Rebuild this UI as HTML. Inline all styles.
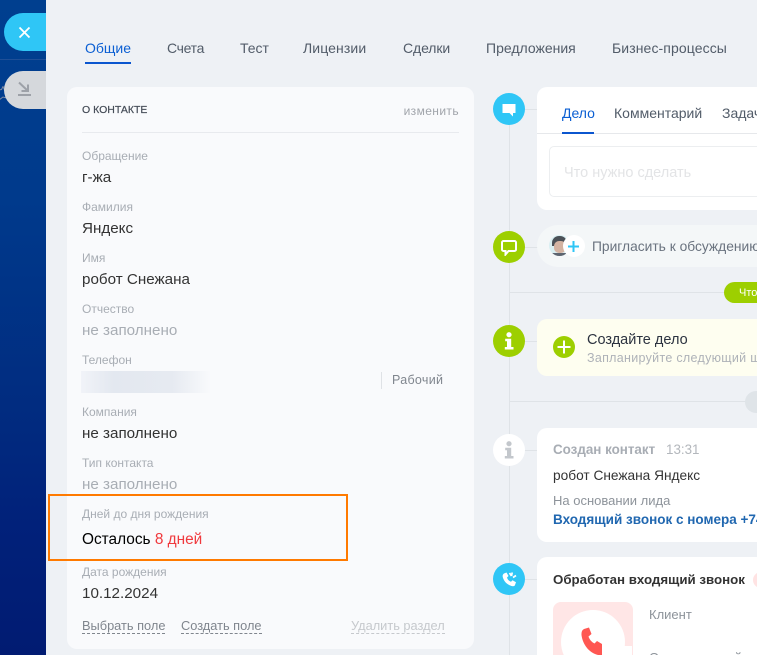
<!DOCTYPE html>
<html lang="ru"><head><meta charset="utf-8"><style>
html,body{margin:0;padding:0;width:757px;height:655px;overflow:hidden}
#r{position:absolute;left:0;top:0;width:757px;height:655px;overflow:hidden;background:#eef1f5;font-family:"Liberation Sans",sans-serif}
.a{position:absolute;white-space:nowrap}
.t{font-size:14px;line-height:16px;color:#525c69;top:40px}
.l{font-size:12px;line-height:14px;color:#a8adb4;left:82px}
.v{font-size:15.2px;line-height:18px;color:#333;left:82px}
.e{color:#a8adb4}
.c{position:absolute;left:493px;width:32px;height:32px;border-radius:50%}
.h{position:absolute;left:510px;height:1px;background:#dfe3e7}
.card{position:absolute;left:537px;width:240px;background:#fff;border-radius:10px}
</style></head><body><div id="r">
<div class="a" style="left:0;top:0;width:46px;height:655px;background:linear-gradient(180deg,#003f8f 0%,#003a8c 30%,#012c80 62%,#01217a 80%,#011b72 100%)"></div>
<div class="a" style="left:0;top:59px;width:46px;height:1px;background:#1f4f97"></div>
<div class="a" style="left:4px;top:13px;width:42px;height:38px;background:#2fc6f6;border-radius:19px 0 0 19px"></div>
<svg class="a" style="left:18px;top:26px" width="13" height="13"><path d="M1.5 1.5L11.5 11.5M11.5 1.5L1.5 11.5" stroke="#fff" stroke-width="1.8"/></svg>
<svg class="a" style="left:0;top:86px" width="12" height="16"><path d="M-2 4L1.5 3.5L3 0.5L4.5 4L8.5 5L6 8L8 12.5L3 11L-1 14" fill="none" stroke="#7d8ba5" stroke-width="1"/></svg>
<div class="a" style="left:4px;top:71px;width:42px;height:38px;background:#d5d8dc;border-radius:19px 0 0 19px"></div>
<svg class="a" style="left:17px;top:80px" width="16" height="18"><path d="M2 2.5L11 11M11 4.5V11H4.5" fill="none" stroke="#9da1a8" stroke-width="2"/><path d="M1 15H14" stroke="#9da1a8" stroke-width="2"/></svg>

<div class="a t" style="left:85px;color:#0b5fd3">Общие</div>
<div class="a" style="left:85px;top:62px;width:46px;height:2px;background:#0b56cf"></div>
<div class="a t" style="left:167px;letter-spacing:-.3px">Счета</div>
<div class="a t" style="left:240px">Тест</div>
<div class="a t" style="left:303px;letter-spacing:.1px">Лицензии</div>
<div class="a t" style="left:403px;letter-spacing:-.1px">Сделки</div>
<div class="a t" style="left:486px">Предложения</div>
<div class="a t" style="left:612px;letter-spacing:.1px">Бизнес-процессы</div>

<div class="a" style="left:67px;top:87px;width:407px;height:562px;background:#f9fafc;border-radius:10px"></div>
<div class="a" style="left:82px;top:103px;font-size:10.5px;line-height:14px;color:#454c57;-webkit-text-stroke:.2px #454c57">О КОНТАКТЕ</div>
<div class="a" style="right:298px;top:104px;font-size:12px;line-height:14px;color:#a0a4aa;letter-spacing:.4px">изменить</div>
<div class="a" style="left:82px;top:132px;width:377px;height:1px;background:#e8eaee"></div>

<div class="a l" style="top:149px">Обращение</div><div class="a v" style="top:169px">г-жа</div>
<div class="a l" style="top:200px">Фамилия</div><div class="a v" style="top:220px">Яндекс</div>
<div class="a l" style="top:251px">Имя</div><div class="a v" style="top:271px">робот Снежана</div>
<div class="a l" style="top:302px">Отчество</div><div class="a v e" style="top:322px">не заполнено</div>
<div class="a l" style="top:353px">Телефон</div>
<div class="a" style="left:81px;top:371px;width:130px;height:22px;background:linear-gradient(90deg,#f1f3f8,#e3e8f0 25%,#e6eaf1 70%,#f9fafc)"></div>
<div class="a" style="left:381px;top:372px;width:1px;height:17px;background:#dfe2e6"></div>
<div class="a" style="left:392px;top:373px;font-size:12.5px;line-height:15px;color:#80868e;letter-spacing:.3px">Рабочий</div>
<div class="a l" style="top:405px">Компания</div><div class="a v" style="top:425px">не заполнено</div>
<div class="a l" style="top:456px">Тип контакта</div><div class="a v e" style="top:476px">не заполнено</div>
<div class="a l" style="top:507px">Дней до дня рождения</div>
<div class="a v" style="top:531px;color:#000;font-size:15.4px">Осталось <span style="color:#f0393d">8 дней</span></div>
<div class="a" style="left:48px;top:494px;width:296px;height:63px;border:2px solid #ff7a00"></div>
<div class="a l" style="top:565px">Дата рождения</div><div class="a v" style="top:585px">10.12.2024</div>
<div class="a" style="left:82px;top:618px;font-size:12.8px;line-height:15px;color:#80868e;border-bottom:1px dashed #80868e">Выбрать поле</div>
<div class="a" style="left:181px;top:618px;font-size:12.8px;line-height:15px;color:#80868e;border-bottom:1px dashed #80868e">Создать поле</div>
<div class="a" style="left:351px;top:618px;font-size:12.8px;line-height:15px;color:#c6c9cd;border-bottom:1px dashed #c6c9cd">Удалить раздел</div>

<div class="a" style="left:509px;top:110px;width:1px;height:545px;background:#dfe3e7"></div>
<div class="h" style="top:109px;width:30px"></div>
<div class="h" style="top:247px;width:30px"></div>
<div class="h" style="top:292px;width:250px"></div>
<div class="h" style="top:341px;width:30px"></div>
<div class="h" style="top:401px;width:250px"></div>
<div class="h" style="top:450px;width:30px"></div>
<div class="h" style="top:579px;width:30px"></div>

<div class="c" style="top:93px;background:#2fc6f6"></div>
<svg class="a" style="left:502px;top:104px" width="14" height="13"><path d="M0.5 0H13.5V9H11V12.5L7.5 9H0.5Z" fill="#fff"/></svg>
<div class="c" style="top:231px;background:#9dcf00"></div>
<svg class="a" style="left:501px;top:240px" width="16" height="16"><path d="M2.5 1H13.5A1.5 1.5 0 0 1 15 2.5V9.5A1.5 1.5 0 0 1 13.5 11H7.5L4.5 14.5V11H2.5A1.5 1.5 0 0 1 1 9.5V2.5A1.5 1.5 0 0 1 2.5 1Z" fill="none" stroke="#fff" stroke-width="2"/></svg>
<div class="c" style="top:325px;background:#9dcf00"></div>
<svg class="a" style="left:504px;top:332px" width="10" height="18"><circle cx="5" cy="2.7" r="2.6" fill="#fff"/><path d="M1.2 6.8H7.2V15H9.5V17.5H0.8V15H3V9.2H1.2Z" fill="#fff"/></svg>
<div class="c" style="top:434px;background:#fff"></div>
<svg class="a" style="left:504px;top:441px" width="10" height="18"><circle cx="5" cy="2.7" r="2.6" fill="#c3c7cc"/><path d="M1.2 6.8H7.2V15H9.5V17.5H0.8V15H3V9.2H1.2Z" fill="#c3c7cc"/></svg>
<div class="c" style="top:563px;background:#2fc6f6"></div>
<svg class="a" style="left:501px;top:571px" width="17" height="17"><path d="M3 2.5L5.5 1.5L7.5 5L6 6.5C6.5 8.5 8 10 10 10.8L11.5 9.3L15 11.3L14 14C13.5 15.3 12 15.5 10.5 15C6 13.5 3 10.5 1.8 6.2C1.4 4.7 1.8 3.2 3 2.5Z" fill="#fff"/><path d="M8.5 2L10.5 5M10.5 5L11.2 1.5M12 6.5L15 4.5" fill="none" stroke="#fff" stroke-width="1.7"/></svg>

<div class="card" style="top:87px;height:123px"></div>
<div class="a t" style="left:562px;top:105px;color:#0b5fd3">Дело</div>
<div class="a t" style="left:614px;top:105px">Комментарий</div>
<div class="a t" style="left:722px;top:105px">Задачи</div>
<div class="a" style="left:537px;top:133px;width:220px;height:1px;background:#e6e8eb"></div>
<div class="a" style="left:562px;top:132px;width:32px;height:2px;background:#0b56cf"></div>
<div class="a" style="left:549px;top:146px;width:240px;height:51px;border:1px solid #eceef0;border-radius:5px;background:#fff;box-sizing:border-box"></div>
<div class="a" style="left:564px;top:164px;font-size:14.5px;line-height:18px;color:#e3e4e6">Что нужно сделать</div>

<div class="a" style="left:537px;top:225px;width:240px;height:42px;background:#f4f7f8;border-radius:21px"></div>
<div class="a" style="left:549px;top:235px;width:21px;height:21px;border-radius:50%;background:#d9eff2;overflow:hidden"><div class="a" style="left:3px;top:1px;width:15px;height:10px;background:#4b5157;border-radius:7px 7px 0 0"></div><div class="a" style="left:5px;top:6px;width:12px;height:12px;background:#d3b3a2;border-radius:5px"></div><div class="a" style="left:2px;top:18px;width:17px;height:4px;background:#5d6570"></div></div>
<div class="a" style="left:563px;top:235px;width:22px;height:22px;border-radius:50%;background:#fff"></div>
<svg class="a" style="left:568px;top:241px" width="11" height="11"><path d="M5.5 0V11M0 5.5H11" stroke="#2fc6f6" stroke-width="2"/></svg>
<div class="a" style="left:592px;top:239px;font-size:13.8px;line-height:16px;color:#6a737f">Пригласить к обсуждению</div>

<div class="a" style="left:724px;top:282px;width:60px;height:21px;border-radius:11px;background:#9dcf00"></div>
<div class="a" style="left:739px;top:286px;font-size:11px;line-height:14px;color:#fff">Что</div>

<div class="card" style="top:319px;height:57px;background:#fefef0"></div>
<div class="a" style="left:553px;top:336px;width:22px;height:22px;border-radius:50%;background:#9dcf00"></div>
<svg class="a" style="left:557px;top:340px" width="14" height="14"><path d="M7 0.5V13.5M0.5 7H13.5" stroke="#fff" stroke-width="2"/></svg>
<div class="a" style="left:587px;top:331px;font-size:14.5px;line-height:18px;color:#2c3340">Создайте дело</div>
<div class="a" style="left:587px;top:351px;font-size:12.5px;line-height:15px;color:#aeb2b8;letter-spacing:.3px">Запланируйте следующий шаг</div>

<div class="a" style="left:745px;top:391px;width:40px;height:22px;border-radius:11px;background:#dfe4e8"></div>

<div class="card" style="top:428px;height:114px"></div>
<div class="a" style="left:553px;top:442px;font-size:13.4px;line-height:16px;font-weight:bold;color:#a8adb4">Создан контакт</div>
<div class="a" style="left:666px;top:442px;font-size:13.4px;line-height:16px;color:#b3b7bc">13:31</div>
<div class="a" style="left:553px;top:467px;font-size:13.7px;line-height:17px;color:#333">робот Снежана Яндекс</div>
<div class="a" style="left:553px;top:493px;font-size:13px;line-height:15px;color:#8d939a">На основании лида</div>
<div class="a" style="left:553px;top:511px;font-size:13.5px;line-height:17px;font-weight:bold;color:#2067b0">Входящий звонок с номера +74</div>

<div class="card" style="top:557px;height:110px"></div>
<div class="a" style="left:553px;top:571px;font-size:13.3px;line-height:17px;font-weight:bold;color:#333">Обработан входящий звонок</div>
<div class="a" style="left:753px;top:572px;width:20px;height:16px;border-radius:8px;background:#ffe3e3"></div>
<div class="a" style="left:553px;top:602px;width:80px;height:53px;background:#ffe6e6;border-radius:8px 8px 0 0;overflow:hidden"><div class="a" style="left:8px;top:8px;width:64px;height:64px;border-radius:50%;background:#fff"></div><div class="a" style="left:55px;top:44px;width:24px;height:12px;background:#fff"></div></div>
<svg class="a" style="left:580px;top:627px" width="28" height="28"><path d="M4 2L9 0.5L11.5 7L8.5 9.5C9.5 12.5 11.5 15 14.5 16.5L17 14L22 17V28H18C9 26 2.5 17 1.5 8C1.3 5 2 3 4 2Z" fill="#ff5752"/></svg>
<div class="a" style="left:649px;top:607px;font-size:13px;line-height:15px;color:#8d939a">Клиент</div>
<div class="a" style="left:649px;top:650px;font-size:13px;line-height:15px;color:#8d939a">Ответственный</div>
</div></body></html>
